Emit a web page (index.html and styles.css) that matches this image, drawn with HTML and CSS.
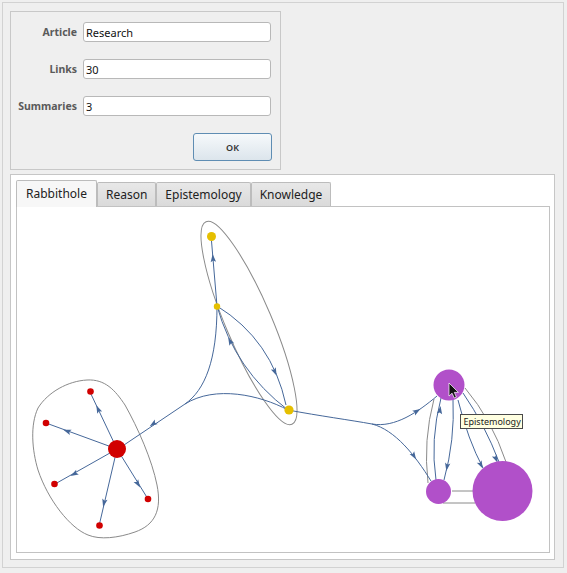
FILE: index.html
```html
<!DOCTYPE html>
<html lang="en">
<head>
<meta charset="UTF-8">
<meta name="viewport" content="width=device-width, initial-scale=1.0">
<title>Rabbithole</title>
<link rel="stylesheet" href="styles.css">
</head>
<body>

<div class="window">
  <form class="query">
    <label for="article">Article</label>
    <input type="text" id="article" value="Research">

    <label for="links">Links</label>
    <input type="text" id="links" value="30">

    <label for="summaries">Summaries</label>
    <input type="text" id="summaries" value="3">

    <button type="button" class="ok">OK</button>
  </form>

  <div class="tabs">
    <div class="tab-bar">
      <div class="tab active">Rabbithole</div>
      <div class="tab">Reason</div>
      <div class="tab">Epistemology</div>
      <div class="tab">Knowledge</div>
    </div>

    <div class="page">
      <svg class="graph" width="532" height="345" viewBox="17 207 532 345">
        <defs>
          <path id="arr" d="M4,0 L-4,-2.7 L-2.4,0 L-4,2.7 Z" fill="#46689a"/>
        </defs>

        <!-- cluster hulls -->
        <g fill="none" stroke="#8a8a8a" stroke-width="1">
          <path d="M87,380 C105,379 115,390 125,405 C138,428 152,460 157,485 C162,510 155,525 135,532 C118,538 100,540 88,535 C70,528 48,500 38,470 C32,450 30,425 38,408 C48,392 68,381 87,380 Z"/>
          <ellipse cx="249" cy="323" rx="110" ry="23" transform="rotate(67 249 323)"/>
          <path d="M428,483 Q423,440 434,399"/>
          <path d="M465,388 Q492,420 506,462"/>
          <path d="M452,491 L473,491"/>
          <path d="M443,503 L475,503"/>
        </g>

        <!-- links -->
        <g fill="none" stroke="#46689a" stroke-width="1">
          <path d="M217,306 L211.5,241"/>
          <path d="M217,306 Q272,340 286,405"/>
          <path d="M288,410 Q235,370 217,306"/>
          <path d="M217,306 C217,360 205,390 185,404 L124,445"/>
          <path d="M288,410 C260,395 215,385 185,404"/>
          <path d="M117,449 L90,392"/>
          <path d="M117,449 L46,423"/>
          <path d="M117,449 L55,484"/>
          <path d="M117,449 L148,499"/>
          <path d="M117,449 L99,526"/>
          <path d="M288,410 C320,416 350,420 372,424"/>
          <path d="M372,424 C395,428 418,412 437,396"/>
          <path d="M372,424 C395,430 415,455 431,481"/>
          <path d="M436,480 Q430,440 441,398"/>
          <path d="M453,399 Q455,440 444,480"/>
          <path d="M458,400 Q468,440 483,468"/>
          <path d="M463,393 Q485,425 499,462"/>
        </g>

        <g>
          <use href="#arr" transform="translate(213,258) rotate(-95)"/>
          <use href="#arr" transform="translate(275,372) rotate(65)"/>
          <use href="#arr" transform="translate(230,341) rotate(-117)"/>
          <use href="#arr" transform="translate(153,424) rotate(146)"/>
          <use href="#arr" transform="translate(98,409) rotate(-115)"/>
          <use href="#arr" transform="translate(67,431) rotate(-160)"/>
          <use href="#arr" transform="translate(74,474) rotate(151)"/>
          <use href="#arr" transform="translate(138,484) rotate(58)"/>
          <use href="#arr" transform="translate(104,503) rotate(103)"/>
          <use href="#arr" transform="translate(417,411) rotate(-32)"/>
          <use href="#arr" transform="translate(414,456) rotate(58)"/>
          <use href="#arr" transform="translate(440,410) rotate(-82)"/>
          <use href="#arr" transform="translate(447,467) rotate(100)"/>
          <use href="#arr" transform="translate(481,465) rotate(62)"/>
          <use href="#arr" transform="translate(496,459) rotate(66)"/>
        </g>

        <!-- nodes -->
        <g fill="#e5bf00">
          <circle cx="211.5" cy="236.5" r="4.5"/>
          <circle cx="217" cy="306.5" r="3.2"/>
          <circle cx="289" cy="410" r="4.6"/>
        </g>
        <g fill="#d10000">
          <circle cx="117" cy="449" r="9"/>
          <circle cx="90.5" cy="391.5" r="3.3"/>
          <circle cx="46" cy="423" r="3.3"/>
          <circle cx="54.5" cy="484" r="3.3"/>
          <circle cx="148" cy="499" r="3.3"/>
          <circle cx="99.5" cy="525.5" r="3.3"/>
        </g>
        <g fill="#b150c9">
          <circle cx="449" cy="385" r="15.5"/>
          <circle cx="438.5" cy="491.5" r="12.5"/>
          <circle cx="502.5" cy="491" r="30"/>
        </g>

        <!-- hover tooltip and pointer -->
        <rect x="460.5" y="414.5" width="62" height="14" fill="#ffffe1" stroke="#4a4a4a" stroke-width="1"/>
        <text class="tip" x="463.5" y="425">Epistemology</text>
        <path d="M0,0 V14.5 L3.4,11.3 L5.8,16.6 L8.2,15.6 L5.9,10.4 L10.4,10.4 Z" fill="#111" stroke="#fff" stroke-width="0.8" transform="translate(449,383) scale(0.9)"/>
      </svg>
    </div>
  </div>
</div>

</body>
</html>
```

FILE: styles.css
```css
* {
  box-sizing: border-box;
}
body {
  margin: 0;
  background-color: #efefef;
  font-family: "Noto Sans", "Open Sans", sans-serif;
  color: #222;
}
.window {
  margin: 2px;
  width: 562px;
  height: 566px;
  border: 1px solid #d2d2d2;
  padding: 8px 8px 7px 7px;
  display: flex;
  flex-direction: column;
  gap: 4px;
}
.query {
  width: 271px;
  height: 159px;
  flex: none;
  border: 1px solid #c8c8c8;
  padding: 10px 9px 8px 0;
  margin: 0;
  display: grid;
  grid-template-columns: 66px 188px;
  grid-template-rows: 20px 20px 20px 28px;
  column-gap: 6px;
  row-gap: 17px;
  align-items: center;
}
.query label {
  text-align: right;
  font-size: 10.5px;
  font-weight: 700;
  color: #5a5a5a;
}
.query input {
  height: 20px;
  width: 188px;
  margin: 0;
  padding: 0 2px;
  border: 1px solid #b8b8b8;
  border-radius: 3px;
  background: #fff;
  font-family: inherit;
  font-size: 11px;
  color: #111;
}
.ok {
  grid-column: 2;
  justify-self: end;
  width: 79px;
  height: 28px;
  margin-right: -1px;
  border: 1px solid #5f8db3;
  border-radius: 3px;
  background: linear-gradient(#f6f9fb, #dce5ec);
  font-family: inherit;
  font-size: 9px;
  font-weight: 600;
  color: #333;
}
.tabs {
  flex: 1;
  border: 1px solid #c6c6c6;
  background: #fff;
  padding: 5px 4px 6px 5px;
  display: flex;
  flex-direction: column;
}
.tab-bar {
  height: 26px;
  display: flex;
  align-items: flex-end;
}
.tab {
  height: 24px;
  padding: 0 8px;
  border: 1px solid #bcbcbc;
  border-bottom: none;
  border-radius: 2px 2px 0 0;
  background: linear-gradient(#e8e8e8, #dadada);
  font-size: 12px;
  line-height: 23px;
  color: #222;
}
.tab.active {
  height: 27px;
  margin-bottom: -1px;
  padding: 0 9px;
  line-height: 26px;
  background: #f7f7f7;
  position: relative;
  z-index: 1;
}
.page {
  width: 534px;
  height: 347px;
  border: 1px solid #c2c2c2;
  background: #fff;
}
.graph {
  display: block;
}
.tip {
  font-family: "Noto Sans", sans-serif;
  font-size: 9px;
  fill: #222;
}
```
